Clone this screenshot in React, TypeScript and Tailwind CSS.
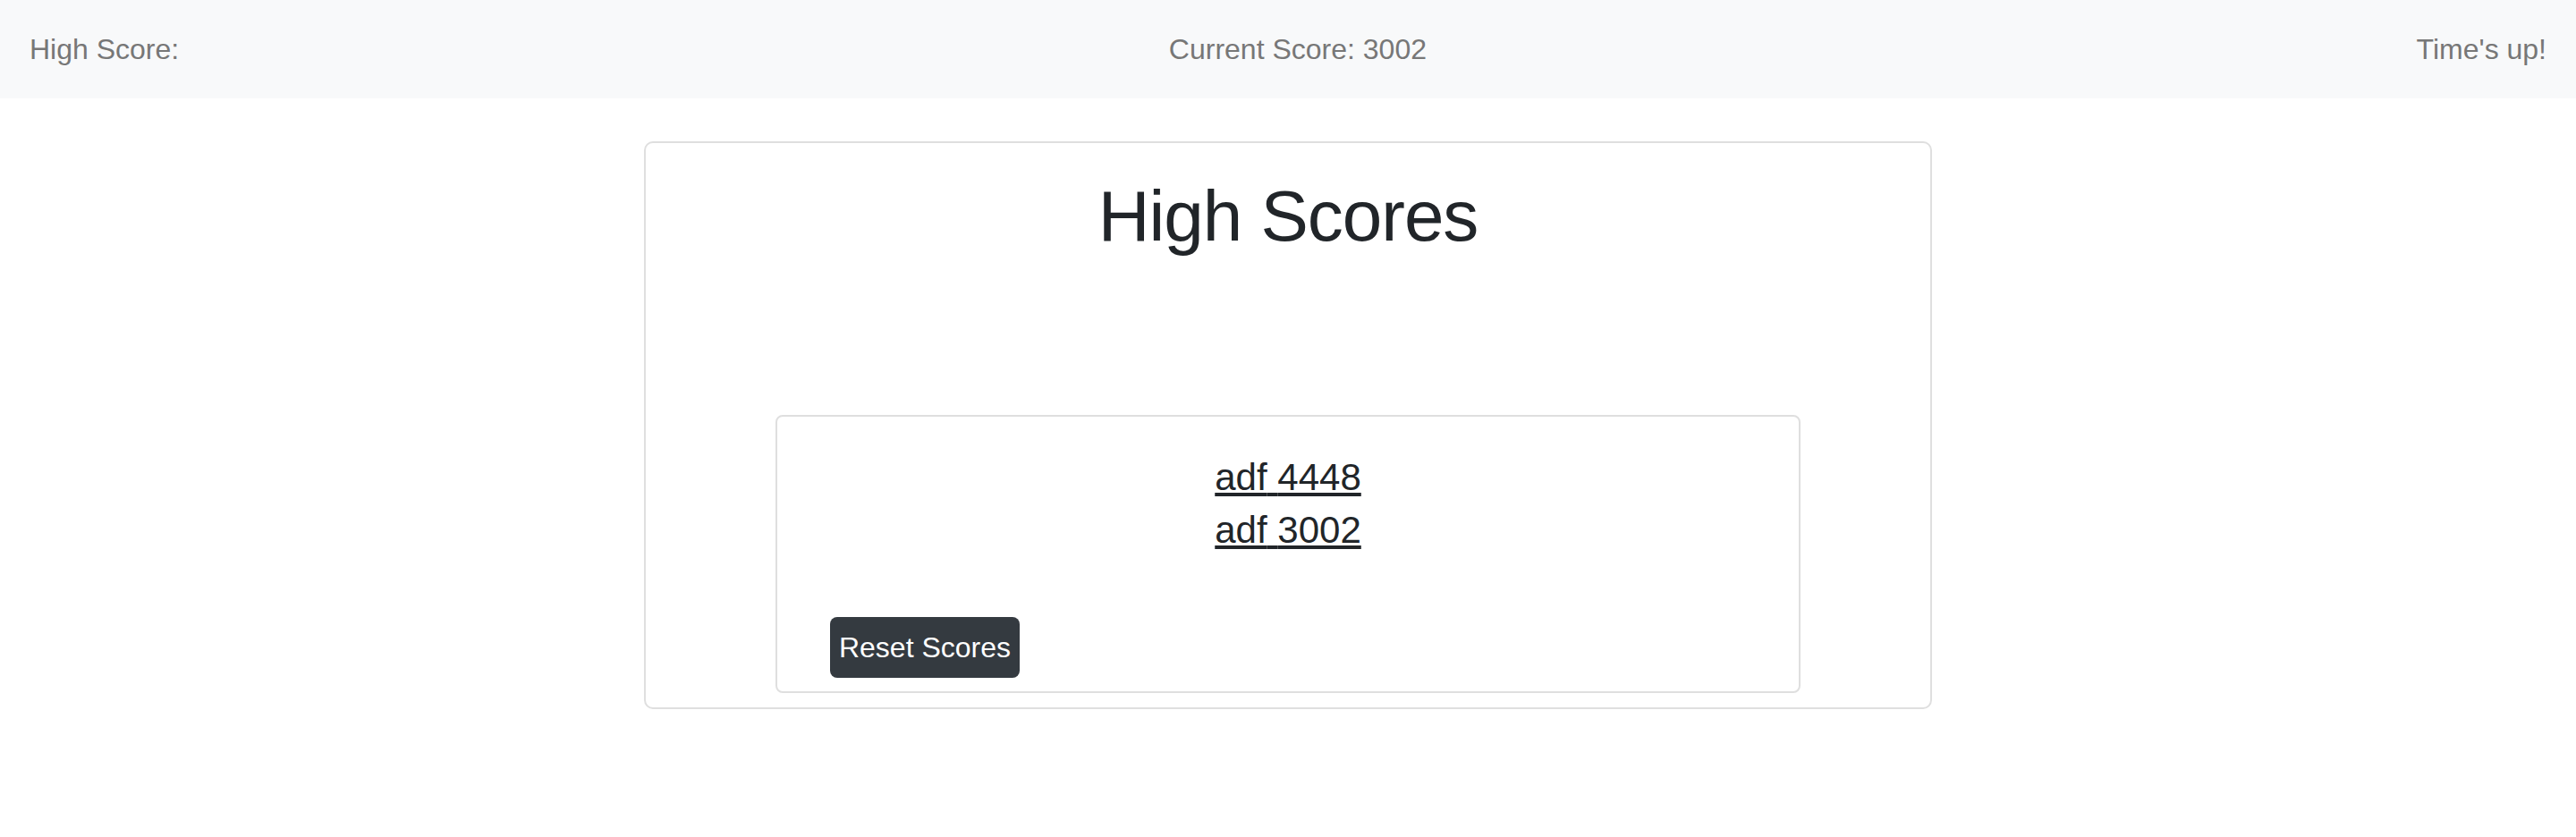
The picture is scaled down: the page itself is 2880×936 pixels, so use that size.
import React from "react";

const scores = [
  { name: "adf", score: 4448 },
  { name: "adf", score: 3002 },
];

export default function App() {
  return (
    <div className="min-h-[936px] bg-white font-['Liberation_Sans',Arial,sans-serif] text-[#212529]">
      <nav className="flex h-[110px] items-center justify-between bg-[#f8f9fa] px-[33px] text-[32px] text-[#777]">
        <span>High Score:</span>
        <span>Current Score: 3002</span>
        <span>Time's up!</span>
      </nav>

      <div className="mx-auto mt-[48px] w-[1440px] rounded-[10px] border-2 border-[#dfdfdf] px-[145px] pb-[16px] pt-[34px]">
        <h1 className="text-center text-[80px] leading-[96px] tracking-[-1px]">
          High Scores
        </h1>

        <div className="mt-[174px] rounded-[8px] border-2 border-[#dfdfdf] px-[59px] pb-[15px] pt-[38px]">
          <div className="flex flex-col items-center">
            {scores.map((s, i) => (
              <a
                key={i}
                href="#"
                className="text-[42px] leading-[59px] text-[#212529] underline"
              >
                {s.name} {s.score}
              </a>
            ))}
          </div>
          <button className="mt-[68px] flex h-[68px] w-[212px] items-center justify-center rounded-[8px] bg-[#343a40] text-[32px] text-white">
            Reset Scores
          </button>
        </div>
      </div>
    </div>
  );
}
